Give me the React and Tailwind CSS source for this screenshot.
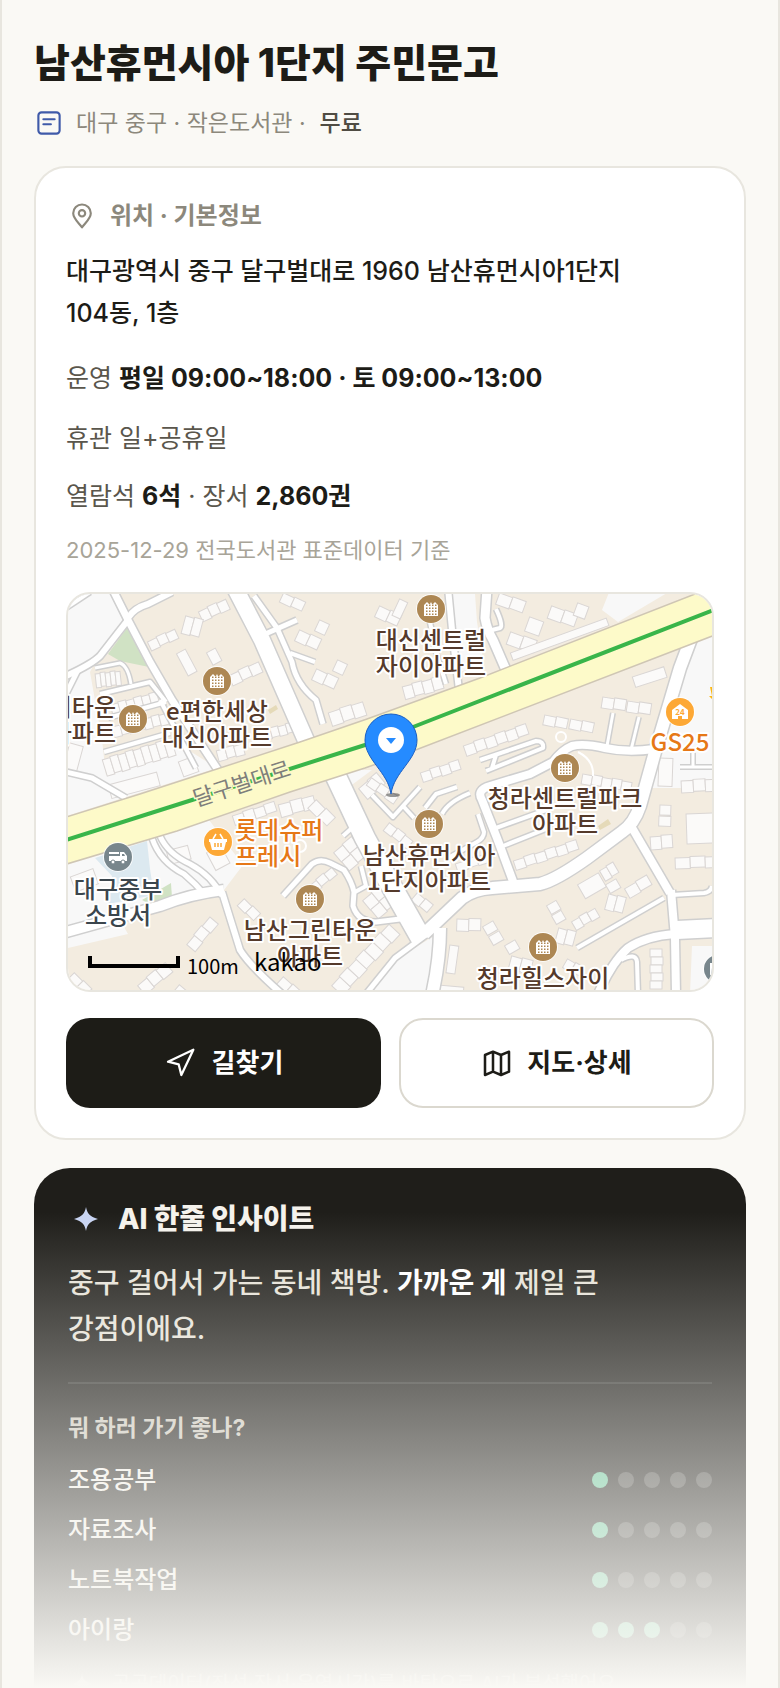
const FONT = 'font-[Inter,"Noto_Sans_CJK_KR",sans-serif]'

const ROADS = [
  { w: 16, d: 'M234 586 L262 640 L308 745' },
  { w: 20, d: 'M332 768 L365 838 L388 880 L422 940' },
  { w: 12, d: 'M440 928 Q440 960 432 995' },
  { w: 5, d: 'M430 932 L395 958 L366 994' },
  { w: 12, d: 'M424 934 L462 898 Q474 889 492 888 L540 884 Q556 880 587 858 L622 832 Q634 824 640 806 L655 752 L680 668 L692 636' },
  { w: 8, d: 'M631 826 L670 893' },
  { w: 8, d: 'M671 890 L675 938 L676 994' },
  { w: 18, d: 'M677 930 L716 928' },
  { w: 8, d: 'M675 934 Q646 936 628 948 Q612 962 598 994' },
  { w: 4, d: 'M577 948 L664 898' },
  { w: 4, d: 'M672 895 L704 893 Q711 892 712 886' },
  { w: 4, d: 'M621 960 Q636 952 637 962 L638 994' },
  { w: 9, d: 'M487 588 L485 618 Q487 630 493 640 L506 670' },
  { w: 4, d: 'M496 609 Q504 626 500 628 L492 630' },
  { w: 6, d: 'M448 588 L453 640 L459 690' },
  { w: 4, d: 'M430 622 L436 652 L446 684' },
  { w: 8, d: 'M654 749 Q628 753 605 748 Q584 743 572 746 Q562 750 553 762 L530 774 L490 786 Q476 790 482 800 L497 838 L514 884' },
  { w: 3, d: 'M613 713 L607 746' },
  { w: 3, d: 'M639 717 L631 750' },
  { w: 3, d: 'M693 752 L693 767 M680 767 L714 767' },
  { w: 4, d: 'M480 760 L536 741 Q544 741 543 748 L486 771 M496 755 L492 768' },
  { w: 4, d: 'M496 828 L546 810' },
  { w: 4, d: 'M503 846 L546 829' },
  { w: 4, d: 'M478 814 L484 832 Q484 838 477 842 L448 858' },
  { w: 4, d: 'M372 795 L393 817 L420 787 M403 806 L414 818' },
  { w: 4, d: 'M425 808 L436 794 L457 787' },
  { w: 4, d: 'M442 814 Q448 802 470 793' },
  { w: 5, d: 'M283 896 L312 864 Q320 858 330 863 L344 870 Q352 882 354 892 L353 906 Q358 922 376 922 L408 918' },
  { w: 4, d: 'M355 892 L366 886 L361 866' },
  { w: 4, d: 'M343 836 L352 828' },
  { w: 7, d: 'M112 588 L128 620 L150 662 L172 700 L218 770' },
  { w: 6, d: 'M128 618 Q134 608 148 604 L172 592' },
  { w: 6, d: 'M128 620 L100 656 Q92 664 66 676' },
  { w: 4, d: 'M66 608 L90 592' },
  { w: 5, d: 'M66 694 L78 670' },
  { w: 3, d: 'M95 668 L120 663 Q128 666 131 684' },
  { w: 4, d: 'M100 694 L150 682 L166 702' },
  { w: 4, d: 'M108 718 L166 702 M104 752 L170 733' },
  { w: 4, d: 'M160 700 L196 768' },
  { w: 5, d: 'M66 772 L92 778 L126 798' },
  { w: 5, d: 'M254 596 L277 628 L292 662 Q296 684 316 700 L323 724' },
  { w: 5, d: 'M263 635 L297 620' },
  { w: 4, d: 'M290 653 L315 662' },
  { w: 5, d: 'M160 836 Q168 854 190 864 Q212 876 222 896' },
  { w: 5, d: 'M152 838 Q160 862 184 874 Q196 884 206 896' },
  { w: 10, d: 'M224 890 Q190 894 160 906 L66 932' },
  { w: 6, d: 'M222 892 L240 950 Q250 966 282 994' },
]

// x, y, angle, cell count, cell width, cell height
const BUILDINGS = [
  [463, 745, -19, 6, 11, 11], [420, 772, -18, 4, 10, 10], [603, 696, 9, 2, 12, 11], [628, 700, 9, 2, 12, 11],
  [545, 714, 12, 2, 12, 10], [571, 718, 12, 2, 12, 10], [583, 773, 10, 5, 10, 10], [681, 780, -3, 3, 12, 12],
  [659, 757, 2, 1, 14, 28], [632, 676, -18, 1, 33, 11], [552, 605, 20, 2, 14, 13], [578, 602, 20, 1, 12, 13],
  [530, 616, 20, 1, 15, 15], [511, 631, 20, 2, 14, 13], [510, 652, -20, 1, 102, 8], [500, 592, 20, 2, 14, 12],
  [513, 860, -18, 6, 11, 10], [577, 884, -30, 1, 24, 16], [599, 870, -30, 2, 8, 12], [605, 884, -30, 1, 12, 10],
  [609, 893, 15, 2, 9, 16], [624, 888, -30, 2, 13, 11], [546, 905, -30, 1, 11, 10], [551, 915, -30, 1, 11, 10],
  [559, 927, 15, 2, 9, 15], [571, 921, -30, 3, 9, 10], [457, 918, 2, 2, 12, 12], [482, 926, -30, 1, 12, 10],
  [488, 936, -30, 1, 12, 10], [504, 945, -30, 1, 12, 10], [512, 955, 15, 2, 11, 14], [450, 944, 8, 1, 9, 28],
  [568, 958, 30, 2, 9, 10], [438, 984, 5, 1, 26, 12], [663, 949, 90, 5, 8, 12], [660, 804, 2, 1, 11, 10],
  [659, 815, 2, 1, 12, 10], [650, 836, -4, 2, 11, 13], [686, 813, -2, 1, 30, 30], [675, 857, -2, 3, 15, 11],
  [232, 815, -18, 4, 11, 10], [278, 804, -15, 3, 12, 13], [317, 799, 45, 2, 13, 12], [333, 852, -40, 2, 12, 12],
  [341, 861, -40, 2, 12, 12], [362, 900, -40, 2, 12, 12], [370, 909, -40, 2, 12, 12], [245, 898, 45, 2, 11, 10],
  [186, 944, -50, 3, 12, 11], [75, 972, 45, 3, 12, 11], [137, 985, -40, 3, 12, 12], [180, 984, 40, 2, 12, 10],
  [331, 985, -47, 7, 12, 15], [284, 976, 42, 3, 12, 13], [308, 886, -40, 3, 10, 9], [95, 673, -6, 5, 5, 14],
  [110, 704, -15, 6, 8, 11], [112, 726, -14, 7, 8, 11], [102, 759, -17, 9, 8, 17], [147, 641, -25, 3, 10, 10],
  [198, 611, -25, 3, 10, 11], [186, 615, 15, 2, 9, 18], [176, 653, -28, 1, 10, 25], [206, 652, -28, 1, 10, 14],
  [228, 675, -25, 3, 11, 11], [262, 730, -15, 4, 8, 10], [216, 750, -15, 3, 9, 11], [284, 592, 25, 2, 12, 10],
  [300, 629, 25, 2, 12, 12], [320, 619, 25, 1, 11, 12], [317, 668, 25, 2, 12, 12], [338, 659, 25, 1, 11, 12],
  [328, 712, -18, 3, 12, 14], [380, 605, 25, 2, 12, 12], [400, 598, 25, 1, 9, 18], [402, 686, -15, 4, 10, 13],
  [108, 784, -15, 1, 50, 14], [178, 761, -20, 1, 16, 16], [358, 788, -40, 2, 12, 14], [372, 777, 35, 3, 11, 9],
  [390, 822, 38, 3, 10, 10], [455, 863, -18, 3, 11, 9], [418, 892, 40, 2, 10, 10], [166, 850, -15, 1, 22, 14],
  [70, 876, -20, 1, 24, 16], [70, 742, 15, 1, 14, 28], [206, 852, -28, 1, 16, 20],
]

const BROWN = '#553a2b'
const ORANGE = '#e67817'
const SLATE = '#3b464d'

const LABELS = [
  { x: 431, y: 649, color: BROWN, lines: ['대신센트럴', '자이아파트'] },
  { x: 217, y: 720, color: BROWN, lines: ['e편한세상', '대신아파트'] },
  { x: 116, y: 716, color: BROWN, anchor: 'end', lines: ['리타운', '아파트'] },
  { x: 565, y: 807, color: BROWN, lines: ['청라센트럴파크', '아파트'] },
  { x: 429, y: 864, color: BROWN, lines: ['남산휴먼시아', '1단지아파트'] },
  { x: 310, y: 939, color: BROWN, lines: ['남산그린타운', '아파트'] },
  { x: 543, y: 987, color: BROWN, lines: ['청라힐스자이'] },
  { x: 118, y: 898, color: SLATE, lines: ['대구중부', '소방서'] },
  { x: 235, y: 839, color: ORANGE, anchor: 'start', lines: ['롯데슈퍼', '프레시'] },
  { x: 680, y: 751, color: ORANGE, lines: ['GS25'] },
]

const APARTMENTS = [
  [431, 609],
  [217, 681],
  [133, 719],
  [565, 768],
  [429, 824],
  [310, 899],
  [543, 947],
]

const SCORES = [
  { label: '조용공부', score: 1 },
  { label: '자료조사', score: 1 },
  { label: '노트북작업', score: 1 },
  { label: '아이랑', score: 3 },
]

const Icon = ({ className, children, strokeWidth = 1.7 }) => (
  <svg
    className={className}
    viewBox="0 0 24 24"
    fill="none"
    stroke="currentColor"
    strokeWidth={strokeWidth}
    strokeLinecap="round"
    strokeLinejoin="round"
    aria-hidden="true"
  >
    {children}
  </svg>
)

const Sparkle = ({ className }) => (
  <svg className={className} viewBox="0 0 24 24" fill="currentColor" aria-hidden="true">
    <path d="M12 0c1.300 6.500 3.500 9.500 12 12-8.500 2.500-10.700 5.500-12 12-1.300-6.500-3.500-9.500-12-12 8.500-2.500 10.700-5.500 12-12z" />
  </svg>
)

const Marker = ({ x, y, color, children }) => (
  <g transform={`translate(${x} ${y})`}>
    <circle r="15" fill="#fff" opacity="0.8" />
    <circle r="14" fill={color} />
    {children}
  </g>
)

const ApartmentMarker = ({ x, y }) => (
  <Marker x={x} y={y} color="#ad8753">
    <path d="M-7 7V-4l3-3 2 2h1l1-2 1 2h1l2-2 3 3V7z" fill="#fff" />
    {[-4, -1, 2, 5].map((row) =>
      [-5, -2, 1, 4].map((col) => (
        <rect key={`${row}${col}`} x={col} y={row - 0.5} width="1.5" height="1.5" fill="#ad8753" />
      )),
    )}
  </Marker>
)

const MapView = () => (
  <svg
    className='block h-99 w-full font-["Noto_Sans_CJK_KR",sans-serif]'
    viewBox="68 594 644 396"
    preserveAspectRatio="xMidYMid slice"
    role="img"
    aria-label="지도"
  >
    <rect x="0" y="500" width="900" height="600" fill="#f3ece0" />

    {/* Blocks */}
    <g fill="#f8f8f8">
      <path d="M60 590H112L128 618 97 658 90 672 102 740 106 775 180 745 217 768 60 818z" />
      <path d="M60 866L177 831 206 816 243 865 224 890 120 920 128 934 60 950z" />
      <path d="M610 590H672L618 622 602 610z" />
      <path d="M695 640L716 632V788H648z" />
      <path d="M434 936L428 994H366L385 966z" />
      <path d="M448 594H475L477 622 484 665 459 672z" />
      <path d="M330 780L358 770 372 770 345 790z" />
      <path d="M692 946H716V994H690z" />
    </g>
    <path d="M127 628L149 667 120 661 108 654z" fill="#d0e2c4" />
    <path d="M171 883L172 898 150 904 142 900z" fill="#d0e2c4" />
    <path d="M95 858L147 841 150 869 154 895 108 904 112 876z" fill="#dce9f0" />
    <path d="M598 826L608 819 611 824 600 830z M268 710l8-5 2 4-8 5z" fill="#e5dab8" />

    {/* Buildings */}
    <g fill="#fbfaf9" stroke="#dad6d4" strokeWidth="1">
      {BUILDINGS.map(([x, y, angle, count, w, h], i) => (
        <g key={i} transform={`translate(${x} ${y}) rotate(${angle})`}>
          {Array.from({ length: count }, (_, n) => (
            <rect key={n} x={n * w} y={n % 2 ? 0 : 1} width={w} height={h} />
          ))}
        </g>
      ))}
    </g>

    {/* Streets */}
    <g fill="none" strokeLinejoin="round">
      {ROADS.map(({ w, d }) => (
        <path key={d} d={d} stroke="#cfcfcf" strokeWidth={w + 3} />
      ))}
      {ROADS.map(({ w, d }) => (
        <path key={d} d={d} stroke="#fff" strokeWidth={w} />
      ))}
    </g>
    <circle cx="561" cy="737" r="5" fill="#f3ece0" stroke="#fff" strokeWidth="2" />
    <circle cx="300" cy="846" r="6" fill="none" stroke="#fff" strokeWidth="2" />
    <path d="M578 752Q594 760 593 776" fill="none" stroke="#fff" strokeWidth="2" />

    {/* Main avenue */}
    <path
      d="M60 819L140 794 300 742 367 719 480 678 695 594 720 584V633L413 751 365 768 290 792 177 831 60 866z"
      fill="#fdfac9"
      stroke="#cfc6b4"
      strokeWidth="1.500"
    />
    <path d="M60 842L192 800 365 745 413 727 716 609" fill="none" stroke="#39b54a" strokeWidth="4" />
    <text
      transform="translate(244 791) rotate(-18)"
      textAnchor="middle"
      fontSize="22"
      fill="#7f7f7b"
      stroke="#fdfac9"
      strokeWidth="3"
      paintOrder="stroke"
    >
      달구벌대로
    </text>

    {/* Places */}
    {APARTMENTS.map(([x, y]) => (
      <ApartmentMarker key={`${x}-${y}`} x={x} y={y} />
    ))}
    <Marker x={118} y={857} color="#78868c">
      <path d="M-9-5H1v2H-9z M-9-1H2v-4H6l3 4v5H-9z" fill="#fff" />
      <circle cx="-5" cy="5" r="2" fill="#fff" stroke="#78868c" />
      <circle cx="5" cy="5" r="2" fill="#fff" stroke="#78868c" />
      <path d="M4-3h2l1 2H4z" fill="#78868c" />
    </Marker>
    <Marker x={218} y={842} color="#fda835">
      <path d="M-9-3H9v3H8L6 8H-6L-8 0h-1z" fill="#fff" />
      <path d="M-5-3l3-5M5-3L2-8" stroke="#fff" strokeWidth="1.500" />
      <path d="M-3 1v4M0 1v4M3 1v4" stroke="#fda835" strokeWidth="1.500" />
    </Marker>
    <Marker x={680} y={712} color="#fda835">
      <path d="M-8 7V-2L0-8 8-2V7H2V4H-2V7z" fill="#fff" />
      <text y="3" textAnchor="middle" fontSize="8" fontWeight="700" fill="#fda835">
        24
      </text>
    </Marker>
    <Marker x={718} y={969} color="#78868c">
      <path d="M-8-6H6V6H-8z" fill="#fff" />
    </Marker>
    <path d="M710 687h4v14l-5-5h3z" fill="#fdb813" />

    {LABELS.map(({ x, y, color, anchor = 'middle', lines }) => (
      <text
        key={`${x}-${y}`}
        textAnchor={anchor}
        fontSize="24"
        fontWeight="500"
        fill={color}
        stroke="#fff"
        strokeWidth="4"
        strokeLinejoin="round"
        paintOrder="stroke"
      >
        {lines.map((line, i) => (
          <tspan key={line} x={x} y={y + i * 26}>
            {line}
          </tspan>
        ))}
      </text>
    ))}

    {/* Pin */}
    <ellipse cx="393" cy="795" rx="7" ry="2" fill="#000" opacity="0.400" />
    <path
      d="M391 794C388 772 365 760 365 740A26 26 0 1 1 417 740C417 760 394 772 391 794z"
      fill="#258bff"
      stroke="#1a5fc4"
      strokeWidth="1"
    />
    <circle cx="391" cy="740" r="13" fill="#fff" />
    <path d="M386 738h10l-5 6z" fill="#258bff" />

    {/* Scale */}
    <path d="M90 956V966H178V956" fill="none" stroke="#000" strokeWidth="4" />
    <text x="187" y="974" fontSize="20" fill="#000">
      100m
    </text>
    <text x="254" y="971" fontSize="24" fill="#000">
      kakao
    </text>
  </svg>
)

const ScoreRow = ({ label, score }) => (
  <li className="flex items-center justify-between">
    <span className="text-2xl leading-9 font-medium text-[#f3f1ea]">{label}</span>
    <span className="flex gap-2.5" role="img" aria-label={`${score}/5`}>
      {[1, 2, 3, 4, 5].map((n) => (
        <span key={n} className={`size-4 rounded-full ${n <= score ? 'bg-[#66c498]' : 'bg-white/20'}`} />
      ))}
    </span>
  </li>
)

const App = () => (
  <main className={`${FONT} min-h-screen border-x-2 border-[#e8e6df] bg-[#faf9f5] px-8 pt-[37px] text-[#1d1c17]`}>
    <h1 className="text-[39px] leading-[52px] font-extrabold">남산휴먼시아 1단지 주민문고</h1>
    <p className="mt-4 flex items-center text-[23px] leading-9 text-[#8c887c]">
      <Icon className="mr-3 size-7.5 text-[#3f5aa9]">
        <rect x="3.500" y="3.500" width="17" height="17" rx="2.500" />
        <path d="M7.500 9h9M7.500 13h6" />
      </Icon>
      대구 중구 · 작은도서관 ·<strong className="ml-3.5 font-medium text-[#4f4c43]">무료</strong>
    </p>

    <section className="mt-[25px] rounded-[32px] border-2 border-[#e8e6df] bg-white p-[30px]">
      <h2 className="flex items-center gap-3 text-2xl leading-9 font-bold text-[#8c887c]">
        <Icon className="size-8" strokeWidth={1.6}>
          <path d="M12 20.500c3.200-4 6.600-6.700 6.600-10.500a6.600 6.600 0 1 0-13.200 0c0 3.800 3.400 6.500 6.600 10.500z" />
          <circle cx="12" cy="10" r="2.400" />
        </Icon>
        위치 · 기본정보
      </h2>
      <p className="mt-4 max-w-[590px] text-[25px] leading-[42px] font-medium break-keep">
        대구광역시 중구 달구벌대로 1960 남산휴먼시아1단지 104동, 1층
      </p>
      <div className="text-[25px] leading-9 text-[#5a564c]">
        <p className="mt-[26px]">
          운영 <strong className="font-bold text-[#1d1c17]">평일 09:00~18:00 · 토 09:00~13:00</strong>
        </p>
        <p className="mt-6">휴관 일+공휴일</p>
        <p className="mt-[22px]">
          열람석 <strong className="font-bold text-[#1d1c17]">6석</strong> · 장서{' '}
          <strong className="font-bold text-[#1d1c17]">2,860권</strong>
        </p>
      </div>
      <p className="mt-5 text-[22px] leading-8 text-[#a8a498]">2025-12-29 전국도서관 표준데이터 기준</p>

      <div className="mt-[26px] overflow-hidden rounded-[24px] border-2 border-[#e8e6df]">
        <MapView />
      </div>

      <div className="mt-[26px] grid grid-cols-2 gap-[18px] text-[26px] leading-9 font-bold">
        <a href="#route" className="flex h-[90px] items-center justify-center gap-4 rounded-[24px] bg-[#1d1c17] text-white">
          <Icon className="size-8">
            <path d="M3 11 22 2 13 21 11 13z" />
          </Icon>
          길찾기
        </a>
        <a href="#detail" className="flex h-[90px] items-center justify-center gap-3.5 rounded-[24px] border-2 border-[#dbd8cf] bg-white">
          <Icon className="size-8" strokeWidth={1.9}>
            <path d="M9 3.500 3 6v15l6-2.500 6 2.500 6-2.500v-15L15 6zM9 3.500v15M15 6v15" />
          </Icon>
          지도·상세
        </a>
      </div>
    </section>

    <section className="relative mt-7 max-h-[520px] overflow-hidden rounded-t-[36px] bg-[#1f1e1a] px-[34px] pt-8">
      <h2 className="flex items-center gap-3.5 text-[28px] leading-[38px] font-extrabold text-[#f5f2ec]">
        <span className="flex w-9 justify-center">
          <Sparkle className="size-6 text-[#c8d4f2]" />
        </span>
        AI 한줄 인사이트
      </h2>
      <p className="mt-[22px] max-w-[560px] text-[28px] leading-[46px] font-medium break-keep text-[#e6e2d8]">
        중구 걸어서 가는 동네 책방. <strong className="font-bold text-white">가까운 게</strong> 제일 큰 강점이에요.
      </p>
      <hr className="mt-[30px] border-t-2 border-white/10" />
      <h3 className="mt-7 text-[23px] leading-8 font-bold text-[#cbc7bc]">뭐 하러 가기 좋나?</h3>
      <ul className="mt-[18px] flex flex-col gap-3.5">
        {SCORES.map((item) => (
          <ScoreRow key={item.label} {...item} />
        ))}
      </ul>
      <p className="mt-[22px] flex items-center gap-5 pl-1 text-xl leading-7 text-white/60">
        <Sparkle className="size-5" />
        공공데이터(좌석·장서·운영시간)를 바탕으로 AI가 분석했어요
      </p>
      <div className="pointer-events-none absolute inset-x-0 bottom-0 h-[476px] bg-linear-to-b from-[#faf9f5]/0 to-[#faf9f5]" />
    </section>
  </main>
)

export default App
